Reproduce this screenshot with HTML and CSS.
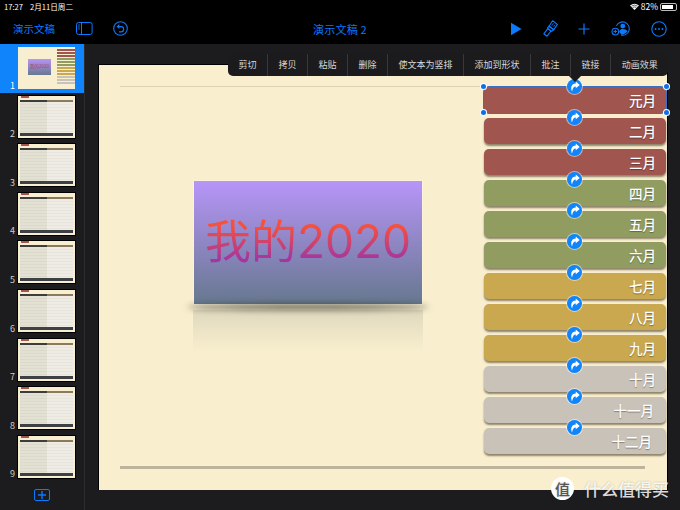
FILE: index.html
```html
<!DOCTYPE html>
<html lang="zh-CN">
<head>
    <meta charset="UTF-8">
    <title>演示文稿 2</title>
    <link rel="stylesheet" href="styles.css">
</head>
<body>

    <!-- Status bar -->
    <div class="status-bar">
        <div class="status-left"><span>17:27</span><span>2月11日周二</span></div>
        <div class="status-right">
            <svg width="9" height="7" viewBox="0 0 12 9"><path d="M6 9 L0 3 Q6 -1.5 12 3 Z" fill="#fff"/><path d="M1.9 4 Q6 1.2 10.1 4" stroke="#000" stroke-width=".8" fill="none"/><path d="M3.6 5.8 Q6 4.2 8.4 5.8" stroke="#000" stroke-width=".8" fill="none"/></svg>
            <span>82%</span>
            <div class="battery"><div class="battery-level"></div></div>
        </div>
    </div>

    <!-- Toolbar -->
    <div class="toolbar">
        <div class="toolbar-left">
            <span class="doc-link">演示文稿</span>
            <svg class="icon-sidebar" width="17" height="13" viewBox="0 0 17 13" fill="none" stroke="#0a7aff" stroke-width="1"><rect x=".5" y=".5" width="15.6" height="12" rx="2"/><path d="M5.5 .5 V12.5"/><path d="M2 3 H4 M2 5 H4 M2 7 H4" stroke-width=".8"/></svg>
            <svg class="icon-undo" width="15" height="15" viewBox="0 0 15 15" fill="none" stroke="#0a7aff" stroke-width="1.1"><circle cx="7.5" cy="7.5" r="6.8"/><path d="M6.4 3.6 L4.4 5.6 L6.4 7.4"/><path d="M4.6 5.6 H8 A2.6 2.6 0 0 1 8 10.9 H6"/></svg>
        </div>
        <div class="doc-title">演示文稿 2</div>
        <div class="toolbar-right">
            <svg width="12" height="14" viewBox="0 0 12 14"><path d="M1 .8 L11.6 7 L1 13.2 Z" fill="#0a7aff"/></svg>
            <svg width="15" height="17" viewBox="0 0 15 17" fill="none" stroke="#0a7aff" stroke-width="1.1" stroke-linejoin="round"><path d="M9.6 .8 L14.4 4.4 L10.8 9.8 L6 6.2 Z"/><path d="M6 6.2 L10.8 9.8 L8.6 11.4 L4.4 8.2 Z"/><path d="M4.8 8.6 L8 11 L4 16.2 L.8 13.8 Z"/><path d="M10.4 3.2 L9 5.6 M12.2 4.6 L10.6 7" stroke-width=".8"/></svg>
            <svg width="12" height="12" viewBox="0 0 12 12" stroke="#0a7aff" stroke-width="1.2"><path d="M6 .5 V11.5 M.5 6 H11.5"/></svg>
            <svg width="20" height="15" viewBox="0 0 22 17" fill="none" stroke="#0a7aff" stroke-width="1.2"><path d="M5.8 5.5 A7.6 7.6 0 1 1 11 16"/><circle cx="13" cy="5.8" r="2.8" fill="#0a7aff" stroke="none"/><path d="M9 12.4 C9.6 9.6 11.4 9.2 13 9.2 C15.4 9.2 17.6 10 18.2 12 C16.4 14.4 14 15.4 11.6 15.6 Z" fill="#0a7aff" stroke="none"/><circle cx="4.6" cy="12" r="3.8"/><path d="M4.6 10 V14 M2.6 12 H6.6"/></svg>
            <svg width="16" height="16" viewBox="0 0 16 16" fill="none" stroke="#0a7aff" stroke-width="1.1"><circle cx="8" cy="8" r="7.2"/><circle cx="4.6" cy="8" r=".9" fill="#0a7aff" stroke="none"/><circle cx="8" cy="8" r=".9" fill="#0a7aff" stroke="none"/><circle cx="11.4" cy="8" r=".9" fill="#0a7aff" stroke="none"/></svg>
        </div>
    </div>

    <div class="workspace">

        <!-- Slide navigator -->
        <div class="sidebar">
            <div class="thumb-row selected">
                <span class="thumb-num">1</span>
                <div class="thumb thumb-cover">
                    <div class="mini-title">我的2020</div>
                    <div class="mini-months">
                        <i class="m-red"></i><i class="m-red"></i><i class="m-red"></i>
                        <i class="m-green"></i><i class="m-green"></i><i class="m-green"></i>
                        <i class="m-gold"></i><i class="m-gold"></i><i class="m-gold"></i>
                        <i class="m-grey"></i><i class="m-grey"></i><i class="m-grey"></i>
                    </div>
                </div>
            </div>
            <div class="thumb-row"><span class="thumb-num">2</span><div class="thumb"><div class="tag"></div><div class="bar-top"><i></i><i></i></div><div class="panels"><i></i><i></i></div><div class="bar-bottom"></div></div></div>
            <div class="thumb-row"><span class="thumb-num">3</span><div class="thumb"><div class="tag"></div><div class="bar-top"><i></i><i></i></div><div class="panels"><i></i><i></i></div><div class="bar-bottom"></div></div></div>
            <div class="thumb-row"><span class="thumb-num">4</span><div class="thumb"><div class="tag"></div><div class="bar-top"><i></i><i></i></div><div class="panels"><i></i><i></i></div><div class="bar-bottom"></div></div></div>
            <div class="thumb-row"><span class="thumb-num">5</span><div class="thumb"><div class="tag"></div><div class="bar-top"><i></i><i></i></div><div class="panels"><i></i><i></i></div><div class="bar-bottom"></div></div></div>
            <div class="thumb-row"><span class="thumb-num">6</span><div class="thumb"><div class="tag"></div><div class="bar-top"><i></i><i></i></div><div class="panels"><i></i><i></i></div><div class="bar-bottom"></div></div></div>
            <div class="thumb-row"><span class="thumb-num">7</span><div class="thumb"><div class="tag"></div><div class="bar-top"><i></i><i></i></div><div class="panels"><i></i><i></i></div><div class="bar-bottom"></div></div></div>
            <div class="thumb-row"><span class="thumb-num">8</span><div class="thumb"><div class="tag"></div><div class="bar-top"><i></i><i></i></div><div class="panels"><i></i><i></i></div><div class="bar-bottom"></div></div></div>
            <div class="thumb-row"><span class="thumb-num">9</span><div class="thumb"><div class="tag"></div><div class="bar-top"><i></i><i></i></div><div class="panels"><i></i><i></i></div><div class="bar-bottom"></div></div></div>
            <div class="add-slide">
                <svg width="8" height="8" viewBox="0 0 8 8" stroke="#0a7aff" stroke-width="1.4"><path d="M4 0 V8 M0 4 H8"/></svg>
            </div>
        </div>

        <!-- Slide canvas -->
        <div class="canvas">
            <div class="slide">
                <div class="rule-top"></div>

                <div class="title-box">
                    <div class="title-text">我的2020</div>
                </div>
                <div class="title-shadow"></div>
                <div class="title-reflect"></div>

                <div class="months">
                    <div class="month red selected-month">元月<span class="h h-tl"></span><span class="h h-tr"></span><span class="h h-bl"></span><span class="h h-br"></span><span class="turn"><svg width="10" height="11" viewBox="0 0 9 10"><path d="M5.2 .4 L8.8 3.6 L5.2 6.6 V4.9 C3.4 4.9 2.2 6.4 1.8 9.6 C.4 6 .9 2.4 5.2 2.2 Z" fill="#fff"/></svg></span></div>
                    <div class="month red">二月<span class="turn"><svg width="10" height="11" viewBox="0 0 9 10"><path d="M5.2 .4 L8.8 3.6 L5.2 6.6 V4.9 C3.4 4.9 2.2 6.4 1.8 9.6 C.4 6 .9 2.4 5.2 2.2 Z" fill="#fff"/></svg></span></div>
                    <div class="month red">三月<span class="turn"><svg width="10" height="11" viewBox="0 0 9 10"><path d="M5.2 .4 L8.8 3.6 L5.2 6.6 V4.9 C3.4 4.9 2.2 6.4 1.8 9.6 C.4 6 .9 2.4 5.2 2.2 Z" fill="#fff"/></svg></span></div>
                    <div class="month green">四月<span class="turn"><svg width="10" height="11" viewBox="0 0 9 10"><path d="M5.2 .4 L8.8 3.6 L5.2 6.6 V4.9 C3.4 4.9 2.2 6.4 1.8 9.6 C.4 6 .9 2.4 5.2 2.2 Z" fill="#fff"/></svg></span></div>
                    <div class="month green">五月<span class="turn"><svg width="10" height="11" viewBox="0 0 9 10"><path d="M5.2 .4 L8.8 3.6 L5.2 6.6 V4.9 C3.4 4.9 2.2 6.4 1.8 9.6 C.4 6 .9 2.4 5.2 2.2 Z" fill="#fff"/></svg></span></div>
                    <div class="month green">六月<span class="turn"><svg width="10" height="11" viewBox="0 0 9 10"><path d="M5.2 .4 L8.8 3.6 L5.2 6.6 V4.9 C3.4 4.9 2.2 6.4 1.8 9.6 C.4 6 .9 2.4 5.2 2.2 Z" fill="#fff"/></svg></span></div>
                    <div class="month gold">七月<span class="turn"><svg width="10" height="11" viewBox="0 0 9 10"><path d="M5.2 .4 L8.8 3.6 L5.2 6.6 V4.9 C3.4 4.9 2.2 6.4 1.8 9.6 C.4 6 .9 2.4 5.2 2.2 Z" fill="#fff"/></svg></span></div>
                    <div class="month gold">八月<span class="turn"><svg width="10" height="11" viewBox="0 0 9 10"><path d="M5.2 .4 L8.8 3.6 L5.2 6.6 V4.9 C3.4 4.9 2.2 6.4 1.8 9.6 C.4 6 .9 2.4 5.2 2.2 Z" fill="#fff"/></svg></span></div>
                    <div class="month gold">九月<span class="turn"><svg width="10" height="11" viewBox="0 0 9 10"><path d="M5.2 .4 L8.8 3.6 L5.2 6.6 V4.9 C3.4 4.9 2.2 6.4 1.8 9.6 C.4 6 .9 2.4 5.2 2.2 Z" fill="#fff"/></svg></span></div>
                    <div class="month grey">十月<span class="turn"><svg width="10" height="11" viewBox="0 0 9 10"><path d="M5.2 .4 L8.8 3.6 L5.2 6.6 V4.9 C3.4 4.9 2.2 6.4 1.8 9.6 C.4 6 .9 2.4 5.2 2.2 Z" fill="#fff"/></svg></span></div>
                    <div class="month grey long-a">十一月<span class="turn"><svg width="10" height="11" viewBox="0 0 9 10"><path d="M5.2 .4 L8.8 3.6 L5.2 6.6 V4.9 C3.4 4.9 2.2 6.4 1.8 9.6 C.4 6 .9 2.4 5.2 2.2 Z" fill="#fff"/></svg></span></div>
                    <div class="month grey long-b">十二月<span class="turn"><svg width="10" height="11" viewBox="0 0 9 10"><path d="M5.2 .4 L8.8 3.6 L5.2 6.6 V4.9 C3.4 4.9 2.2 6.4 1.8 9.6 C.4 6 .9 2.4 5.2 2.2 Z" fill="#fff"/></svg></span></div>
                </div>

                <div class="rule-bottom"></div>
            </div>
        </div>
    </div>

    <!-- Edit menu popup -->
    <div class="edit-menu">
        <span>剪切</span><span>拷贝</span><span>粘贴</span><span>删除</span><span>使文本为竖排</span><span>添加到形状</span><span>批注</span><span>链接</span><span>动画效果</span>
        <div class="menu-arrow"></div>
    </div>

    <!-- Watermark -->
    <div class="watermark">
        <div class="wm-logo">值</div>
        <span>什么值得买</span>
    </div>

</body>
</html>
```

FILE: styles.css
```css
* {
    box-sizing: border-box;
}

body {
    margin: 0;
    width: 680px;
    height: 510px;
    overflow: hidden;
    display: flex;
    flex-direction: column;
    position: relative;
    background-color: #000;
    font-family: "Noto Sans CJK SC", "Noto Sans", sans-serif;
}

.status-bar {
    height: 13px;
    padding: 0 3px 0 4px;
    display: flex;
    justify-content: space-between;
    align-items: center;
    color: #fff;
    font-size: 7.6px;
    line-height: 13px;
}

.status-left {
    display: flex;
    gap: 7px;
}

.status-right {
    display: flex;
    align-items: center;
    gap: 2px;
}

.status-right span {
    font-size: 8.5px;
}

.battery {
    width: 17px;
    height: 8px;
    border: 1px solid #bbb;
    border-radius: 2px;
    padding: 1px;
}

.battery-level {
    width: 82%;
    height: 100%;
    background-color: #fff;
}

.toolbar {
    height: 31px;
    position: relative;
    display: flex;
    justify-content: space-between;
    align-items: center;
    padding: 0 13px;
}

.toolbar-left {
    display: flex;
    align-items: center;
}

.doc-link {
    color: #0a7aff;
    font-size: 10.5px;
}

.icon-sidebar {
    margin-left: 21px;
}

.icon-undo {
    margin-left: 20px;
}

.doc-title {
    position: absolute;
    left: 0;
    right: 0;
    text-align: center;
    color: #0a7aff;
    font-size: 11px;
    letter-spacing: 0.2px;
}

.toolbar-right {
    display: flex;
    align-items: center;
    gap: 20.5px;
}

.workspace {
    flex: 1;
    display: flex;
    background-color: #1c1c1e;
}

.sidebar {
    width: 85px;
    border-right: 1px solid #2b2b2d;
    display: flex;
    flex-direction: column;
}

.thumb-row {
    height: 48.6px;
    padding: 3px 9px 0 18px;
    position: relative;
    flex-shrink: 0;
}

.thumb-row.selected {
    background-color: #0f84fb;
}

.thumb-num {
    position: absolute;
    right: 69px;
    bottom: 2px;
    font-size: 9px;
    line-height: 10px;
    color: #ccc;
}

.selected .thumb-num {
    color: #fff;
}

.thumb {
    width: 57px;
    height: 42px;
    background-color: #f8eed0;
    outline: 1px solid #000;
    padding: 0 1px 2px;
    position: relative;
    display: flex;
    flex-direction: column;
}

.tag {
    width: 8px;
    height: 2px;
    margin-left: 2px;
    background-color: #a8544e;
}

.bar-top {
    height: 2px;
    margin: 2px 1px 0;
    display: flex;
}

.bar-top i {
    flex: 1;
    background-color: #3d3d3d;
}

.bar-top i + i {
    background-color: #8a7b5e;
}

.panels {
    flex: 1;
    margin: 0 1px;
    display: flex;
}

.panels i {
    flex: 1;
    background: repeating-linear-gradient(#e2e1d3 0, #e2e1d3 2px, #dad9ca 2px, #dad9ca 3px);
}

.panels i + i {
    background: repeating-linear-gradient(#eeece4 0, #eeece4 2px, #e6e4db 2px, #e6e4db 3px);
}

.bar-bottom {
    height: 3px;
    margin: 0 1px;
    background-color: #3d4045;
}

.thumb-cover {
    outline: none;
}

.mini-title {
    position: absolute;
    left: 10px;
    top: 12px;
    width: 23px;
    height: 16px;
    background: linear-gradient(#b795f8, #66788f);
    color: #b2435f;
    font-size: 4.5px;
    line-height: 14px;
    text-align: center;
    white-space: nowrap;
}

.mini-months {
    position: absolute;
    right: 0;
    top: 2px;
    width: 18px;
    display: flex;
    flex-direction: column;
    gap: 0.6px;
}

.mini-months i {
    height: 2.4px;
}

.m-red {
    background-color: #a0564f;
}

.m-green {
    background-color: #919d60;
}

.m-gold {
    background-color: #c9a84f;
}

.m-grey {
    background-color: #c9c2b8;
}

.add-slide {
    width: 16px;
    height: 12px;
    margin: 8px 0 0 34px;
    border: 1px solid #0a7aff;
    border-radius: 2px;
    display: flex;
    justify-content: center;
    align-items: center;
}

.canvas {
    flex: 1;
    padding: 20px 0 0 13px;
}

.slide {
    width: 569px;
    height: 426px;
    position: relative;
    background-color: #f9efcf;
    border-left: 1px solid #000;
    border-top: 1px solid #000;
    box-shadow: 1px 0 0 #000;
}

.rule-top {
    position: absolute;
    left: 21px;
    top: 21px;
    width: 364px;
    height: 1px;
    background-color: #ddd3ae;
}

.rule-bottom {
    position: absolute;
    left: 21px;
    top: 401px;
    width: 525px;
    height: 3px;
    background-color: #bdb59b;
}

.title-box {
    position: absolute;
    left: 94px;
    top: 115px;
    width: 230px;
    height: 125px;
    background: linear-gradient(#b795f8, #66788f);
    border: 1px solid #fbf3d8;
    display: flex;
    justify-content: center;
    align-items: center;
}

.title-text {
    font-family: Inter, "Noto Sans CJK SC", sans-serif;
    font-size: 46px;
    line-height: 60px;
    margin-top: -3px;
    white-space: nowrap;
    background: linear-gradient(#f8503a 25%, #a535a0 80%);
    -webkit-background-clip: text;
    background-clip: text;
    color: transparent;
}

.title-shadow {
    position: absolute;
    left: 88px;
    top: 239px;
    width: 242px;
    height: 6px;
    border-radius: 50%;
    background-color: rgba(60, 60, 50, 0.8);
    filter: blur(3px);
}

.title-reflect {
    position: absolute;
    left: 94px;
    top: 245px;
    width: 230px;
    height: 42px;
    background: linear-gradient(rgba(120, 125, 120, 0.2), rgba(120, 125, 120, 0));
}

.months {
    position: absolute;
    left: 385px;
    top: 22px;
    width: 182px;
    display: flex;
    flex-direction: column;
    gap: 5px;
}

.month {
    height: 26px;
    border-radius: 5px;
    position: relative;
    padding-right: 10px;
    text-align: right;
    color: #fff;
    font-size: 13.5px;
    font-weight: 500;
    line-height: 26px;
    text-shadow: 0 1px 1px rgba(0, 0, 0, 0.35);
    box-shadow: 0 2px 2px rgba(70, 60, 40, 0.6);
}

.long-a {
    padding-right: 12px;
}

.long-b {
    padding-right: 14px;
}

.red {
    background-color: #a0564f;
}

.green {
    background-color: #919d60;
}

.gold {
    background-color: #c9a84f;
}

.grey {
    background-color: #c9c2b8;
}

.selected-month {
    box-shadow: 0 0 0 1px #3a6fc4;
}

.turn {
    position: absolute;
    left: 83px;
    top: -8px;
    width: 15px;
    height: 15px;
    border-radius: 50%;
    background-color: #0f84fb;
    box-shadow: 0 0 0 1px rgba(255, 255, 255, 0.5);
    display: flex;
    justify-content: center;
    align-items: center;
    z-index: 2;
}

.h {
    position: absolute;
    width: 5px;
    height: 5px;
    border-radius: 50%;
    background-color: #0f6fe8;
    box-shadow: 0 0 0 1px #fff;
    z-index: 2;
}

.h-tl {
    left: -3px;
    top: -3px;
}

.h-tr {
    right: -3px;
    top: -3px;
}

.h-bl {
    left: -3px;
    bottom: -2px;
}

.h-br {
    right: -3px;
    bottom: -2px;
}

.edit-menu {
    position: absolute;
    left: 228px;
    top: 54px;
    height: 22px;
    display: flex;
    background-color: #1b1b1d;
    border-radius: 0 0 5px 5px;
    color: #d8d8d8;
    font-size: 9px;
    z-index: 5;
}

.edit-menu span {
    padding: 0 10.5px;
    line-height: 22px;
    border-right: 1px solid #38383a;
}

.edit-menu span:nth-of-type(9) {
    border-right: none;
}

.menu-arrow {
    position: absolute;
    left: 341px;
    top: 22px;
    border-left: 6px solid transparent;
    border-right: 6px solid transparent;
    border-top: 6px solid #1b1b1d;
}

.watermark {
    position: absolute;
    left: 551px;
    top: 476px;
    display: flex;
    align-items: center;
    gap: 10px;
    color: rgba(255, 255, 255, 0.85);
    font-size: 17px;
    font-weight: 500;
    white-space: nowrap;
    text-shadow: 0 0 2px rgba(0, 0, 0, 0.25);
    z-index: 6;
}

.wm-logo {
    width: 23px;
    height: 23px;
    border-radius: 50%;
    background-color: #fff;
    color: #555;
    font-size: 15px;
    line-height: 23px;
    text-align: center;
}
```
